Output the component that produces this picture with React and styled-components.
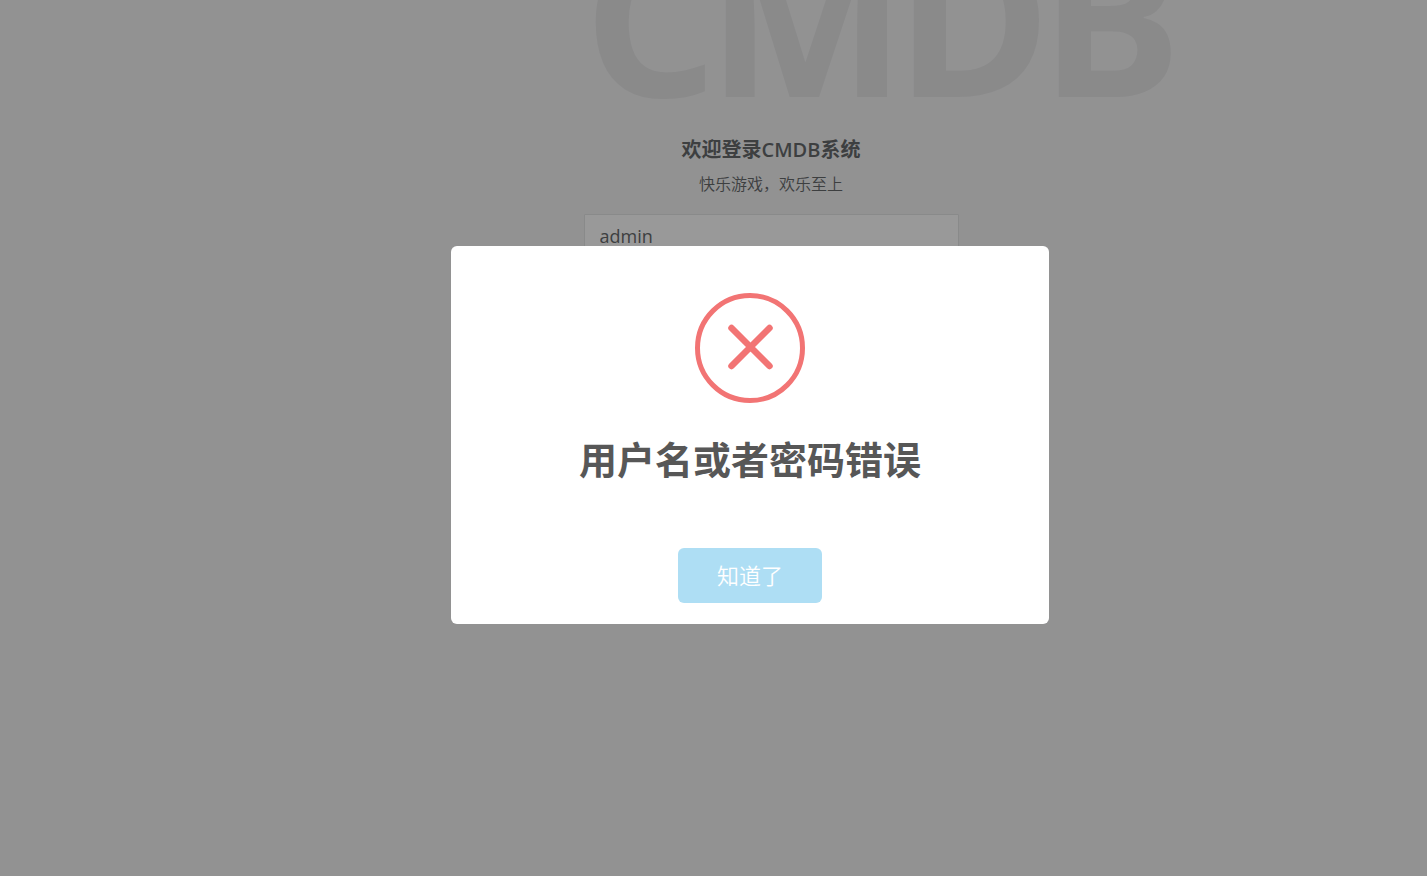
import { useState } from "react";
import styled, { createGlobalStyle } from "styled-components";

const GlobalStyle = createGlobalStyle`
  * {
    box-sizing: border-box;
  }
  body {
    margin: 0;
    overflow: hidden;
    background-color: #f3f3f4;
    color: #676a6c;
    font-family: "Open Sans", "Noto Sans CJK SC", sans-serif;
    font-size: 16px;
    font-weight: 350;
  }
`;

const Page = styled.main`
  display: flex;
  justify-content: center;
  min-height: 100vh;
  padding-left: 115px;
`;

const LoginBox = styled.div`
  width: 375px;
  text-align: center;
`;

const LogoName = styled.h1`
  margin: -90px 0 0;
  color: #e6e6e6;
  font-size: 211px;
  font-weight: 700;
  line-height: 1;
  letter-spacing: -11px;
  text-align: left;
  white-space: nowrap;
`;

const Welcome = styled.h3`
  margin: 17px 0 10px;
  font-size: 20px;
  font-weight: 600;
  line-height: 24px;
`;

const Slogan = styled.p`
  margin: 0 0 18px;
  line-height: 24px;
`;

const Input = styled.input`
  display: block;
  width: 100%;
  height: 44px;
  padding: 8px 15px;
  border: 1px solid #e5e6e7;
  border-radius: 1px;
  background-color: #fff;
  color: inherit;
  font-family: inherit;
  font-size: 18px;
  font-weight: 400;
`;

const Overlay = styled.div`
  position: fixed;
  inset: 0;
  display: flex;
  align-items: center;
  justify-content: center;
  padding: 0 0 6px 73px;
  background-color: rgba(0, 0, 0, 0.4);
`;

const Alert = styled.section`
  display: flex;
  flex-direction: column;
  align-items: center;
  width: 598px;
  max-width: 100%;
  padding: 47px 21px 21px;
  border-radius: 6px;
  background-color: #fff;
`;

const ErrorIcon = styled.svg`
  width: 110px;
  height: 110px;
  fill: none;
  stroke: #f27474;
`;

const AlertTitle = styled.h2`
  margin: 31px 0 64px;
  color: #575757;
  font-size: 38px;
  font-weight: 700;
  line-height: 50px;
`;

const ConfirmButton = styled.button`
  padding: 12px 39px;
  border: none;
  border-radius: 6px;
  background-color: #aedef4;
  color: #fff;
  font-family: inherit;
  font-size: 22px;
  font-weight: inherit;
  line-height: 31px;
  cursor: pointer;
`;

const ErrorAlert = ({ title, onClose }) => {
  return (
    <Overlay>
      <Alert role="alertdialog" aria-modal="true" aria-labelledby="alert-title">
        <ErrorIcon viewBox="0 0 110 110" aria-hidden="true">
          <circle cx="55" cy="55" r="52.5" strokeWidth="5" />
          <path
            d="M36.5 35 L74.5 73 M74.5 35 L36.5 73"
            strokeWidth="6.5"
            strokeLinecap="round"
          />
        </ErrorIcon>
        <AlertTitle id="alert-title">{title}</AlertTitle>
        <ConfirmButton type="button" onClick={onClose}>
          知道了
        </ConfirmButton>
      </Alert>
    </Overlay>
  );
};

const App = () => {
  const [username, setUsername] = useState("admin");
  const [showError, setShowError] = useState(true);

  return (
    <>
      <GlobalStyle />
      <Page>
        <LoginBox>
          <LogoName>CMDB</LogoName>
          <Welcome>欢迎登录CMDB系统</Welcome>
          <Slogan>快乐游戏，欢乐至上</Slogan>
          <form onSubmit={(e) => e.preventDefault()}>
            <Input
              type="text"
              name="username"
              aria-label="用户名"
              value={username}
              onChange={(e) => setUsername(e.target.value)}
            />
          </form>
        </LoginBox>
      </Page>
      {showError && (
        <ErrorAlert title="用户名或者密码错误" onClose={() => setShowError(false)} />
      )}
    </>
  );
};

export default App;
